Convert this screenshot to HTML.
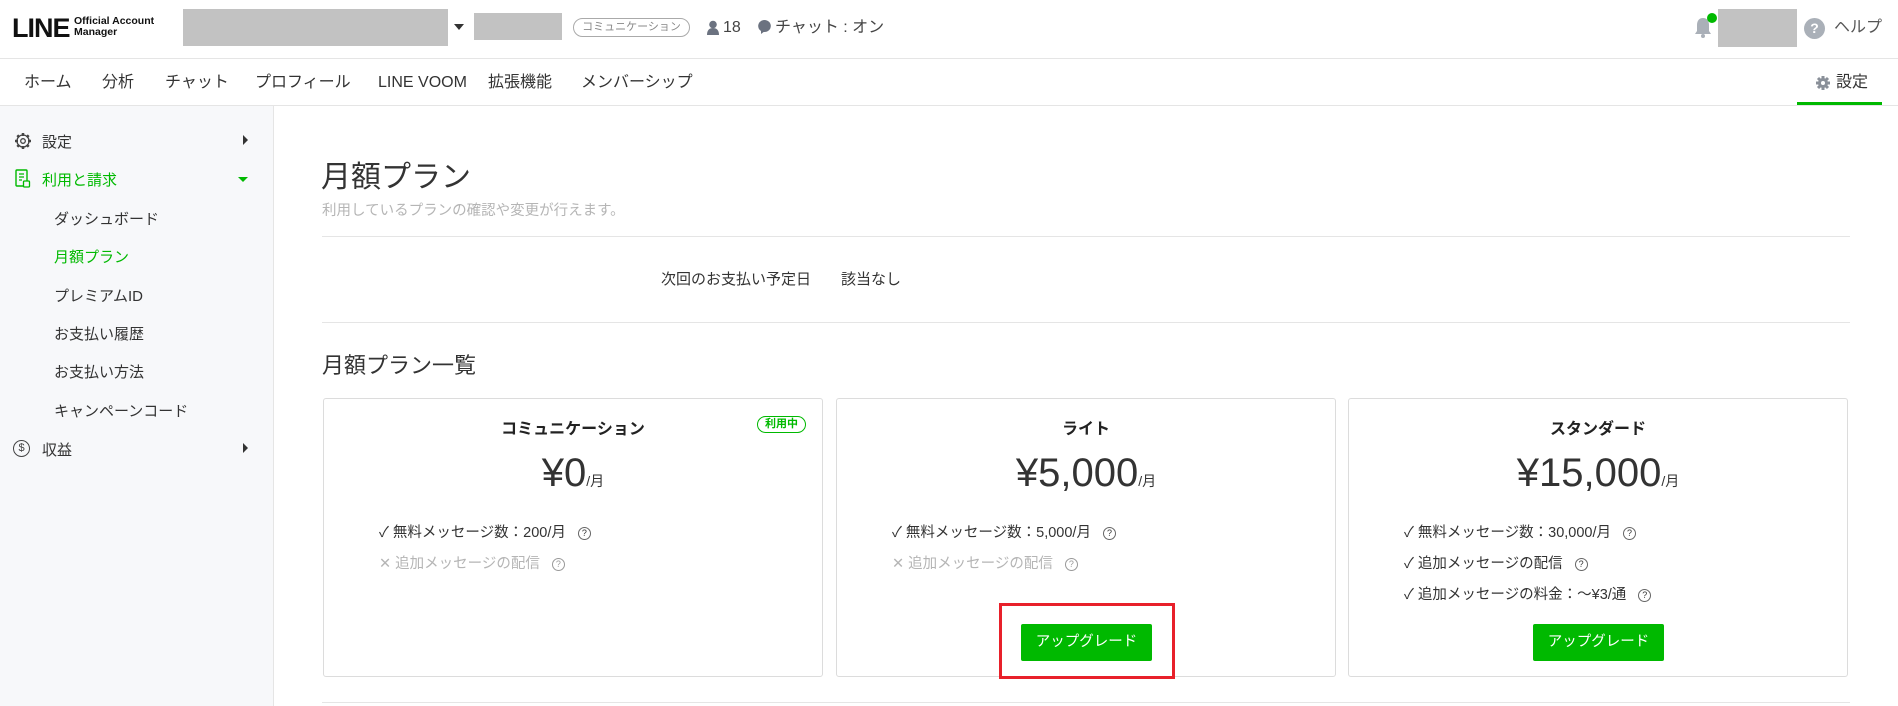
<!DOCTYPE html>
<html><head><meta charset="utf-8"><style>
*{margin:0;padding:0;box-sizing:border-box}
body{width:1898px;height:706px;overflow:hidden;background:#fff;font-family:"Liberation Sans","Noto Sans CJK JP",sans-serif;color:#333;position:relative}
.a{position:absolute;white-space:nowrap}
.gray{background:#c2c2c2;position:absolute}
.hl{position:absolute;height:1px;background:#e5e5e5}
.nav{font-size:16px;color:#333;top:73px;line-height:20px;height:20px}
.side{font-size:15px;color:#333}
.card{position:absolute;top:398px;width:500px;height:279px;border:1px solid #dcdcdc;border-radius:3px;background:#fff}
.ct{position:absolute;top:16px;left:0;right:0;text-align:center;font-weight:bold;font-size:16px;color:#222}
.pr{position:absolute;top:50px;left:0;right:0;text-align:center;font-size:40px;color:#333;line-height:48px}
.pr small{font-size:14px}
.f{position:absolute;left:55px;font-size:14.5px;color:#333}
.f.d{color:#b5b5b5}
.q{display:inline-block;width:13px;height:13px;border:1px solid #666;border-radius:50%;font-size:9px;line-height:11px;text-align:center;margin-left:12px;vertical-align:1px}
.d .q{border-color:#999;color:#999}
.btn{position:absolute;top:225px;width:131px;height:37px;background:#00b900;color:#fff;font-size:14.5px;text-align:center;line-height:37px;border-radius:2px}
</style></head><body>
<div class="a" style="left:12px;top:13px;font-weight:900;font-size:27px;letter-spacing:-1px;color:#111;font-family:'Liberation Sans',sans-serif">LINE</div>
<div class="a" style="left:74px;top:16px;font-weight:bold;font-size:10.5px;line-height:11px;color:#111">Official Account<br>Manager</div>
<div class="gray" style="left:183px;top:9px;width:265px;height:37px"></div>
<div class="a" style="left:454px;top:24px;width:0;height:0;border-left:5px solid transparent;border-right:5px solid transparent;border-top:6px solid #333"></div>
<div class="gray" style="left:474px;top:13px;width:88px;height:27px"></div>
<div class="a" style="left:573px;top:18px;width:117px;height:19px;border:1px solid #aaa;border-radius:10px;font-size:11px;color:#888;text-align:center;line-height:17px">コミュニケーション</div>
<svg class="a" style="left:706px;top:20px" width="14" height="16" viewBox="0 0 14 16"><circle cx="7" cy="4.5" r="3.8" fill="#6b7280"/><path d="M1 15c0-5 2.5-7 6-7s6 2 6 7z" fill="#6b7280"/></svg>
<div class="a" style="left:723px;top:18px;font-size:16px;line-height:20px;color:#444">18</div>
<svg class="a" style="left:758px;top:20px" width="13" height="15" viewBox="0 0 13 15"><ellipse cx="6.5" cy="6" rx="6.3" ry="6" fill="#6b7280"/><path d="M3 10l0 4 4-3z" fill="#6b7280"/></svg>
<div class="a" style="left:775px;top:18px;font-size:16px;line-height:20px;color:#444">チャット : オン</div>
<svg class="a" style="left:1692px;top:15px" width="22" height="26" viewBox="0 0 22 26"><path d="M11 3c-4 0-6 3-6 7v6l-2 3h16l-2-3v-6c0-4-2-7-6-7z" fill="#aab0b8"/><rect x="9" y="19" width="4" height="4" rx="2" fill="#aab0b8"/></svg>
<div class="a" style="left:1707px;top:13px;width:10px;height:10px;border-radius:50%;background:#00b900"></div>
<div class="gray" style="left:1718px;top:9px;width:79px;height:38px"></div>
<div class="a" style="left:1804px;top:18px;width:21px;height:21px;border-radius:50%;background:#aab0b8;color:#fff;font-size:14px;text-align:center;line-height:21px;font-weight:bold">?</div>
<div class="a" style="left:1834px;top:18px;font-size:16px;line-height:20px;color:#555">ヘルプ</div>
<div class="hl" style="left:0;top:58px;width:1898px"></div>
<div class="a nav" style="left:24px">ホーム</div>
<div class="a nav" style="left:102px">分析</div>
<div class="a nav" style="left:165px">チャット</div>
<div class="a nav" style="left:255px">プロフィール</div>
<div class="a nav" style="left:378px">LINE VOOM</div>
<div class="a nav" style="left:488px">拡張機能</div>
<div class="a nav" style="left:581px">メンバーシップ</div>
<svg class="a" style="left:1816px;top:76px" width="14" height="14" viewBox="0 0 14 14"><circle cx="7" cy="7" r="5" fill="#8a9099"/><g stroke="#8a9099" stroke-width="3"><path d="M7 0v14M0 7h14M2 2l10 10M12 2L2 12"/></g><circle cx="7" cy="7" r="2" fill="#fff"/></svg>
<div class="a nav" style="left:1836px">設定</div>
<div class="a" style="left:1797px;top:102px;width:85px;height:3px;background:#00b900"></div>
<div class="hl" style="left:0;top:105px;width:1898px"></div>
<div class="a" style="left:0;top:106px;width:274px;height:600px;background:#f7f8fa;border-right:1px solid #e5e5e5"></div>
<svg class="a" style="left:14px;top:132px" width="18" height="18" viewBox="0 0 18 18"><circle cx="9" cy="9" r="6" fill="none" stroke="#444" stroke-width="1.3"/><circle cx="9" cy="9" r="2.3" fill="none" stroke="#444" stroke-width="1.3"/><g stroke="#444" stroke-width="2.5"><path d="M9 1v3M9 14v3M1 9h3M14 9h3M3.3 3.3l2 2M12.7 12.7l2 2M14.7 3.3l-2 2M5.3 12.7l-2 2"/></g></svg>
<div class="a side" style="left:42px;top:131px">設定</div>
<div class="a" style="left:243px;top:135px;border-top:5px solid transparent;border-bottom:5px solid transparent;border-left:5px solid #333"></div>
<svg class="a" style="left:15px;top:169px" width="16" height="19" viewBox="0 0 16 19"><rect x="1" y="1" width="11" height="16" rx="1" fill="none" stroke="#00b900" stroke-width="1.4"/><path d="M4 5h5M4 8h5M4 11h3" stroke="#00b900" stroke-width="1.3"/><rect x="8.5" y="12" width="6" height="6" rx="1" fill="#f7f8fa" stroke="#00b900" stroke-width="1.3"/></svg>
<div class="a side" style="left:42px;top:169px;color:#00b900">利用と請求</div>
<div class="a" style="left:238px;top:177px;border-left:5px solid transparent;border-right:5px solid transparent;border-top:5px solid #00b900"></div>
<div class="a side" style="left:54px;top:208px">ダッシュボード</div>
<div class="a side" style="left:54px;top:246px;color:#00b900">月額プラン</div>
<div class="a side" style="left:54px;top:285px">プレミアムID</div>
<div class="a side" style="left:54px;top:323px">お支払い履歴</div>
<div class="a side" style="left:54px;top:361px">お支払い方法</div>
<div class="a side" style="left:54px;top:400px">キャンペーンコード</div>
<div class="a" style="left:13px;top:440px;width:17px;height:17px;border:1.3px solid #444;border-radius:50%;font-size:11px;text-align:center;line-height:15px;color:#444">$</div>
<div class="a side" style="left:42px;top:439px">収益</div>
<div class="a" style="left:243px;top:443px;border-top:5px solid transparent;border-bottom:5px solid transparent;border-left:5px solid #333"></div>
<div class="a" style="left:321px;top:152px;font-size:30px;color:#333">月額プラン</div>
<div class="a" style="left:322px;top:199px;font-size:14.5px;color:#b5b5b5">利用しているプランの確認や変更が行えます。</div>
<div class="hl" style="left:322px;top:236px;width:1528px"></div>
<div class="a" style="left:661px;top:268px;font-size:15px;color:#333">次回のお支払い予定日</div>
<div class="a" style="left:841px;top:268px;font-size:15px;color:#333">該当なし</div>
<div class="hl" style="left:322px;top:322px;width:1528px"></div>
<div class="a" style="left:322px;top:348px;font-size:22px;color:#333">月額プラン一覧</div>
<div class="card" style="left:323px">
 <div class="ct">コミュニケーション</div>
 <div class="a" style="right:16px;top:17px;width:49px;height:17px;border:1px solid #00b900;border-radius:9px;color:#00b900;font-size:11px;font-weight:bold;text-align:center;line-height:15px">利用中</div>
 <div class="pr">¥0<small>/月</small></div>
 <div class="f" style="left:55px;top:122px">✓ 無料メッセージ数：200/月<span class="q">?</span></div>
 <div class="f d" style="left:55px;top:153px">✕ 追加メッセージの配信<span class="q">?</span></div>
</div>
<div class="card" style="left:836px">
 <div class="ct">ライト</div>
 <div class="pr">¥5,000<small>/月</small></div>
 <div class="f" style="top:122px">✓ 無料メッセージ数：5,000/月<span class="q">?</span></div>
 <div class="f d" style="top:153px">✕ 追加メッセージの配信<span class="q">?</span></div>
 <div class="btn" style="left:184px">アップグレード</div>
</div>
<div class="card" style="left:1348px">
 <div class="ct">スタンダード</div>
 <div class="pr">¥15,000<small>/月</small></div>
 <div class="f" style="top:122px">✓ 無料メッセージ数：30,000/月<span class="q">?</span></div>
 <div class="f" style="top:153px">✓ 追加メッセージの配信<span class="q">?</span></div>
 <div class="f" style="top:184px">✓ 追加メッセージの料金：～¥3/通<span class="q">?</span></div>
 <div class="btn" style="left:184px">アップグレード</div>
</div>
<div class="a" style="left:999px;top:603px;width:176px;height:76px;border:3px solid #e8202a"></div>
<div class="hl" style="left:322px;top:702px;width:1528px"></div>
</body></html>
